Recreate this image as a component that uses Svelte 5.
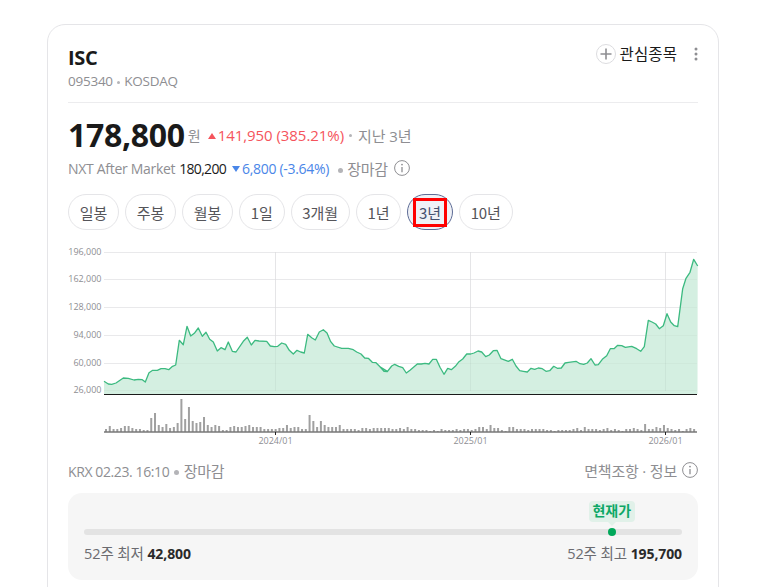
<script>
  const periods = ['일봉', '주봉', '월봉', '1일', '3개월', '1년', '3년', '10년'];
  const active = '3년';
  const left = [[132,424],[145,432],[155,433],[168,429],[190,414],[205,415],[222,420],[235,418],[247,419],[256,426],[267,398],[278,391],[292,391],[303,386],[315,386],[326,389],[336,380],[347,375],[358,301],[370,314],[381,259],[392,288],[403,280],[415,264],[427,289],[438,277],[449,298],[460,306],[472,333],[483,323],[495,329],[505,306],[517,334],[528,336],[550,304],[562,292],[574,315],[585,301],[597,303],[620,304],[631,318],[643,320],[653,319],[665,309],[677,313],[688,331],[700,342],[711,331],[722,336],[733,339],[743,283],[755,293],[766,300],[778,276],[790,269],[801,279],[812,305],[823,318],[845,325],[865,325],[880,329],[890,336],[903,342],[914,354],[925,355],[937,367],[948,368],[960,380],[971,393],[982,394]];
  const right = [[0,380],[12,394],[22,395],[35,378],[44,373],[56,379],[68,383],[79,399],[90,391],[112,372],[124,372],[135,370],[147,372],[158,358],[169,358],[180,382],[192,403],[203,385],[214,389],[226,379],[237,365],[248,357],[260,342],[272,342],[282,339],[294,333],[305,336],[317,350],[328,345],[340,332],[351,331],[363,356],[385,364],[397,358],[408,378],[419,392],[430,394],[442,396],[453,385],[464,388],[475,384],[487,386],[498,394],[509,392],[521,379],[532,385],[544,384],[555,369],[566,367],[588,364],[600,371],[611,373],[622,369],[633,356],[645,375],[655,374],[667,358],[680,347],[691,326],[702,326],[713,316],[725,317],[736,322],[755,319],[770,326],[782,334],[793,320],[805,241],[816,246],[827,252],[838,266],[850,257],[861,221],[872,246],[883,257],[893,260],[908,146],[918,115],[930,97],[941,58],[953,78]];
  const pts = [
    ...left.map(([x, y]) => [60 + x / 3, 240 + y / 3]),
    ...right.map(([x, y]) => [380 + x / 3, 240 + y / 3])
  ].map(([x, y]) => `${x.toFixed(1)},${y.toFixed(1)}`);
  const line = pts.join(' ');
  const area = `104,394 ${line} 697.5,394`;

  const grid = [
    ['196,000', 252.5], ['162,000', 279.5], ['128,000', 307.5], ['94,000', 335.5], ['60,000', 363.5], ['26,000', 390.5]
  ];
  const ticks = [['2024/01', 275.5], ['2025/01', 470.5], ['2026/01', 665.5]];
  const vols = [3,6,3,3,4,6,6,4,3,3,2,2,14,19,7,5,8,4,5,9,33,13,25,11,9,10,15,7,5,7,6,2,2,5,6,5,5,6,7,5,5,5,3,3,3,3,4,4,7,4,5,5,3,3,17,11,5,11,7,5,5,5,7,3,3,3,3,2,4,4,3,4,4,4,4,4,
    3,3,4,3,5,3,3,2,2,2,1,2,1,3,2,2,2,3,2,3,3,2,3,5,5,3,7,4,4,2,1,5,5,3,3,3,2,3,3,3,3,2,2,1,2,2,2,2,3,4,2,5,3,3,3,2,3,4,2,3,2,1,3,3,4,3,2,2,3,3,5,4,7,4,3,2,3,1,3,4,3,5,5,3,1];
  vols[143] = 8;
  const bars = vols.slice(0, 157).map((h, i) => ({ x: 105 + i * 3.77, h }));
</script>

<div class="page">
  <section class="card">
    <header class="head">
      <div>
        <h1>ISC</h1>
        <p class="code">095340 <i class="dot"></i> KOSDAQ</p>
      </div>
      <div class="actions">
        <svg class="plus" width="20" height="20" viewBox="0 0 20 20" aria-hidden="true">
          <circle cx="10" cy="10" r="9.5" fill="#fff" stroke="#dcdcdf"/>
          <path d="M10 4.5v11M4.5 10h11" stroke="#8e8e92" stroke-width="1.6"/>
        </svg>
        <span class="watch">관심종목</span>
        <svg class="more" width="4" height="14" viewBox="0 0 4 14" aria-hidden="true">
          <circle cx="2" cy="2" r="1.5"/><circle cx="2" cy="7" r="1.5"/><circle cx="2" cy="12" r="1.5"/>
        </svg>
      </div>
    </header>

    <div class="price-row">
      <strong class="price">178,800</strong>
      <span class="won">원</span>
      <span class="up"><i class="tri-up"></i>141,950 (385.21%)</span>
      <i class="dot"></i>
      <span class="period">지난 3년</span>
    </div>

    <div class="nxt-row">
      <span class="muted">NXT After Market</span>
      <span class="nxt-price">180,200</span>
      <span class="down"><i class="tri-down"></i>6,800 (-3.64%)</span>
      <span class="status"><i class="dot big"></i>장마감</span>
      <svg class="info" width="16" height="16" viewBox="0 0 16 16" aria-hidden="true">
        <circle cx="8" cy="8" r="7.4" fill="none" stroke="#8e8e92"/>
        <circle cx="8" cy="4.6" r="0.9" fill="#8e8e92"/>
        <path d="M8 7v5.2" stroke="#8e8e92" stroke-width="1.3"/>
      </svg>
    </div>

    <nav class="tabs">
      {#each periods as p}
        <button class:on={p === active}>{p}</button>
      {/each}
    </nav>

    <svg class="chart" width="670" height="210" viewBox="48 245 670 210" role="img" aria-label="3년 주가 차트">
      {#each grid as [label, y]}
        <line x1="104" x2="697" y1={y} y2={y} class="grid"/>
        <text x="101.5" y={y + 2.6} text-anchor="end" class="axis">{label}</text>
      {/each}
      {#each ticks as [, x]}
        <line x1={x} x2={x} y1="252" y2="391" class="grid"/>
      {/each}
      <polygon points={area} fill="#d4efe1"/>
      {#each grid as [, y]}
        <line x1="104" x2="697" y1={y} y2={y} stroke="#000" stroke-opacity="0.025"/>
      {/each}
      {#each ticks as [, x]}
        <line x1={x} x2={x} y1="252" y2="391" stroke="#000" stroke-opacity="0.04"/>
      {/each}
      <polyline points={line} fill="none" stroke="#3cba80" stroke-width="1.3" stroke-linejoin="round"/>
      <line x1="104" x2="697" y1="394.5" y2="394.5" stroke="#1a1a1a" stroke-width="1"/>
      {#each bars as b}
        <rect x={b.x} y={432 - b.h} width="2" height={b.h} fill="#a0a0a0"/>
      {/each}
      <line x1="104" x2="697" y1="432" y2="432" stroke="#777" stroke-width="1.4"/>
      {#each ticks as [label, x]}
        <line x1={x} x2={x} y1="432" y2="435" stroke="#222"/>
        <text x={x} y="444" text-anchor="middle" class="axis">{label}</text>
      {/each}
    </svg>

    <div class="meta">
      <span><span class="stamp">KRX 02.23. 16:10</span> <i class="dot big"></i> 장마감</span>
      <span class="meta-right">
        면책조항 · 정보
        <svg width="16" height="16" viewBox="0 0 16 16" aria-hidden="true">
          <circle cx="8" cy="8" r="7.4" fill="none" stroke="#8e8e92"/>
          <circle cx="8" cy="4.6" r="0.9" fill="#8e8e92"/>
          <path d="M8 7v5.2" stroke="#8e8e92" stroke-width="1.3"/>
        </svg>
      </span>
    </div>

    <div class="range">
      <div class="track">
        <div class="marker">
          <span class="bubble">현재가</span>
          <i class="knob"></i>
        </div>
      </div>
      <div class="range-labels">
        <span>52주 최저 <b>42,800</b></span>
        <span>52주 최고 <b>195,700</b></span>
      </div>
    </div>
  </section>
</div>

<style>
  :global(body) {
    margin: 0;
    background: #fff;
    overflow: hidden;
  }
  .page {
    height: 587px;
    overflow: hidden;
    padding: 24px 44px 0 47px;
    box-sizing: border-box;
    font-family: "Open Sans", "Noto Sans CJK KR", sans-serif;
    color: #1a1a1a;
  }
  .card {
    width: 672px;
    box-sizing: border-box;
    border: 1px solid #e5e5e8;
    border-radius: 18px;
    padding: 19px 20px 30px;
    background: #fff;
  }
  .head {
    display: flex;
    justify-content: space-between;
    align-items: flex-start;
    height: 58px;
    border-bottom: 1px solid #ececee;
  }
  h1 {
    margin: 0;
    font-size: 20px;
    line-height: 28px;
    font-weight: 700;
    letter-spacing: -0.3px;
  }
  .code {
    margin: 0;
    font-size: 13.5px;
    line-height: 18px;
    color: #8e8e92;
    letter-spacing: -0.25px;
  }
  .dot {
    display: inline-block;
    width: 3px;
    height: 3px;
    border-radius: 50%;
    background: #b4b4b8;
    vertical-align: middle;
    margin: 0 1px;
  }
  .dot.big {
    width: 5px;
    height: 5px;
  }
  .actions {
    display: flex;
    align-items: center;
    height: 20px;
  }
  .plus {
    margin-right: 4px;
  }
  .watch {
    font-size: 15.5px;
    line-height: 20px;
    color: #1a1a1a;
    letter-spacing: 0.1px;
  }
  .more {
    margin-left: 17px;
    margin-right: 0;
    fill: #8e8e92;
  }
  .price-row {
    display: flex;
    align-items: center;
    height: 32px;
    margin-top: 16px;
  }
  .price {
    font-size: 32px;
    line-height: 32px;
    font-weight: 700;
    letter-spacing: -0.3px;
    color: #1a1a1a;
  }
  .won {
    font-size: 14px;
    color: #8e8e92;
    margin: 0 7px 0 3px;
  }
  .up {
    font-size: 15px;
    letter-spacing: -0.06px;
    color: #f5545c;
    margin-right: 4px;
  }
  .tri-up, .tri-down {
    display: inline-block;
    width: 0;
    height: 0;
    border-left: 4px solid transparent;
    border-right: 4px solid transparent;
    vertical-align: middle;
    margin-right: 2px;
  }
  .tri-up {
    border-bottom: 6px solid #f5545c;
    margin-top: -2px;
  }
  .tri-down {
    border-top: 6px solid #4a86e8;
    margin-top: -1px;
  }
  .period {
    font-size: 15px;
    color: #8e8e92;
    margin-left: 5px;
    letter-spacing: -0.1px;
  }
  .nxt-row {
    display: flex;
    align-items: center;
    height: 20px;
    margin-top: 7px;
    font-size: 14px;
    letter-spacing: -0.3px;
  }
  .muted {
    color: #8e8e92;
  }
  .nxt-price {
    margin-left: 4px;
    color: #1a1a1a;
    letter-spacing: -0.7px;
  }
  .down {
    margin-left: 6px;
    color: #4a86e8;
  }
  .status {
    margin-left: 9px;
    color: #8e8e92;
    font-size: 15px;
  }
  .status .dot {
    margin: 0 4px 0 0;
  }
  .info {
    margin-left: 6px;
  }
  .tabs {
    display: flex;
    gap: 6px;
    margin-top: 16px;
  }
  button {
    position: relative;
    height: 36px;
    box-sizing: border-box;
    padding: 0 10.8px;
    border: 1px solid #e5e5e8;
    border-radius: 18px;
    background: #fff;
    font-family: "Noto Sans CJK KR", sans-serif;
    font-size: 15px;
    letter-spacing: -0.1px;
    color: #55555a;
  }
  button.on {
    background: #eff1f6;
    border-color: #5d6c96;
    color: #44506e;
  }
  button.on::after {
    content: "";
    position: absolute;
    inset: 3px 5px 2px 5px;
    border: 3px solid #f00;
  }
  .chart {
    display: block;
    margin: 15px -20px 0;
  }
  .grid {
    stroke: #efeff1;
    stroke-width: 1;
  }
  .axis {
    font-size: 9px;
    fill: #8e8e92;
    font-family: "Open Sans", sans-serif;
  }
  .meta {
    display: flex;
    justify-content: space-between;
    align-items: center;
    height: 22px;
    margin-top: 4px;
    font-size: 15px;
    color: #8e8e92;
    letter-spacing: -0.2px;
  }
  .stamp {
    font-size: 14px;
    letter-spacing: -0.4px;
  }
  .meta-right {
    display: flex;
    align-items: center;
    gap: 5px;
  }
  .range {
    margin-top: 12px;
    height: 87px;
    box-sizing: border-box;
    padding: 36px 16px 0;
    background: #f6f6f6;
    border-radius: 14px;
  }
  .track {
    position: relative;
    height: 6px;
    border-radius: 3px;
    background: #e3e3e3;
  }
  .marker {
    position: absolute;
    left: 88.25%;
    top: 3px;
  }
  .knob {
    position: absolute;
    left: -4px;
    top: -4px;
    width: 8px;
    height: 8px;
    border-radius: 50%;
    background: #00a85a;
  }
  .bubble {
    position: absolute;
    left: -23px;
    top: -31px;
    width: 46px;
    height: 21px;
    line-height: 20px;
    text-align: center;
    font-size: 14px;
    font-weight: 700;
    color: #0ca866;
    background: #e1f1e9;
    border-radius: 4px;
  }
  .bubble::after {
    content: "";
    position: absolute;
    left: 19px;
    top: 21px;
    border-left: 4px solid transparent;
    border-right: 4px solid transparent;
    border-top: 4px solid #e1f1e9;
  }
  .range-labels {
    display: flex;
    justify-content: space-between;
    margin-top: 9px;
    font-size: 14.5px;
    letter-spacing: -0.1px;
    line-height: 20px;
    color: #6b6b70;
  }
  b {
    color: #2a2a2a;
    font-weight: 700;
    font-size: 14px;
  }
</style>
